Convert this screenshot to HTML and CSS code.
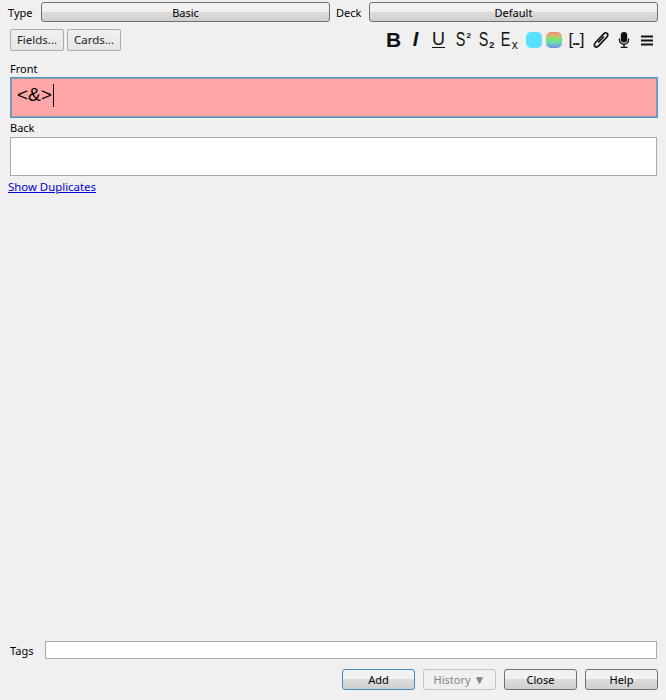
FILE: index.html
```html
<!DOCTYPE html>
<html lang="en">
<head>
<meta charset="utf-8">
<title>Add</title>
<link rel="stylesheet" href="styles.css">
</head>
<body>
<div class="app">
  <div class="chooser">
    <span class="chooser-label type-label">Type</span>
    <button class="combo">Basic</button>
    <span class="chooser-label deck-label">Deck</span>
    <button class="combo">Default</button>
  </div>
  <div class="toolbar">
    <button class="flat">Fields...</button>
    <button class="flat">Cards...</button>
    <div class="icons">
      <span class="ic ic-b">B</span>
      <span class="ic ic-i">I</span>
      <span class="ic ic-u">U</span>
      <span class="ic ic-s"><span class="narrow">S</span><sup>2</sup></span>
      <span class="ic ic-s"><span class="narrow">S</span><sub>2</sub></span>
      <span class="ic ic-e"><span class="narrow">E</span><sub>x</sub></span>
      <span class="swatch-cell"><span class="swatch swatch-blue"></span></span>
      <span class="swatch-cell"><span class="swatch swatch-rainbow"></span></span>
      <span class="ic ic-cloze">[<b class="dots">...</b>]</span>
      <span class="svg-cell"><svg width="18" height="18" viewBox="0 0 18 18" fill="none" stroke="#111" stroke-width="1.700" stroke-linecap="round"><path d="M11.500 3.200 3.500 11.500c-1.500 1.600-1.500 3.200-.5 4 1 .8 2.500.5 3.800-.8l7.700-8.200c1.500-1.700 1.600-3.300.6-4.200-1.100-.9-2.600-.7-3.600.9z"/><path d="M11.500 6 6.700 11"/></svg></span>
      <span class="svg-cell"><svg width="18" height="18" viewBox="0 0 18 18" fill="#111"><rect x="5.800" y="1" width="6.400" height="10.500" rx="3.200"/><path d="M3.800 7.500h1.300v1.300c0 2.100 1.700 3.800 3.900 3.800s3.900-1.700 3.900-3.800V7.500h1.300v1.400c0 2.600-1.900 4.600-4.500 4.900v1.900h2.800V17H5.700v-1.300h2.600v-1.900c-2.600-.3-4.500-2.300-4.500-4.900z"/></svg></span>
      <span class="svg-cell"><svg width="14" height="18" viewBox="0 0 14 18" fill="#111"><rect x="1" y="4.500" width="12" height="2"/><rect x="1" y="8.500" width="12" height="2"/><rect x="1" y="12.500" width="12" height="2"/></svg></span>
    </div>
  </div>
  <div class="field-label front-label">Front</div>
  <div class="field field-front"><span class="field-text">&lt;&amp;&gt;</span><span class="caret"></span></div>
  <div class="field-label back-label">Back</div>
  <div class="field field-back"></div>
  <a class="dupes" href="#">Show Duplicates</a>
  <div class="spacer"></div>
  <div class="tags">
    <span class="tags-label">Tags</span>
    <div class="tags-input"></div>
  </div>
  <div class="actions">
    <button class="btn btn-default">Add</button>
    <button class="btn btn-disabled">History <span class="arrow">▼</span></button>
    <button class="btn">Close</button>
    <button class="btn">Help</button>
  </div>
</div>
</body>
</html>
```

FILE: styles.css
```css
* { box-sizing: border-box; }
html, body { margin: 0; padding: 0; }
body {
  background: #f0f0f0;
  color: #000;
  font-family: "Noto Sans", "Open Sans", sans-serif;
  font-size: 11px;
  line-height: 14px;
}
.app {
  width: 666px;
  height: 700px;
  display: flex;
  flex-direction: column;
  overflow: hidden;
}
button { font: inherit; color: inherit; padding: 0; margin: 0; }

.chooser {
  display: flex;
  align-items: center;
  height: 20px;
  margin: 2px 8px 0 0;
}
.chooser-label { flex: none; padding-top: 2px; }
.type-label { width: 41px; padding-left: 8px; }
.deck-label { width: 39px; padding-left: 6px; }
.combo {
  flex: 1 1 0;
  height: 20px;
  border: 1px solid #707070;
  border-radius: 3px;
  background: linear-gradient(#f2f2f2 0 45%, #dddddd 50%, #cfcfcf 100%);
  padding-top: 1px;
}

.toolbar {
  display: flex;
  align-items: center;
  height: 23px;
  margin-top: 6px;
  padding: 0 8px 0 10px;
  gap: 3px;
}
.flat {
  width: 54px;
  height: 22px;
  border: 1px solid #acacac;
  border-radius: 2px;
  background: linear-gradient(#f0f0f0, #e5e5e5);
  font-size: 11.500px;
  color: #222;
}
.icons {
  margin-left: auto;
  display: flex;
  align-items: center;
  height: 23px;
  font-family: "Liberation Sans", sans-serif;
}
.ic {
  display: block;
  flex: none;
  width: 23px;
  text-align: center;
  color: #111;
  line-height: 23px;
  white-space: nowrap;
}
.ic-b { font-weight: 700; font-size: 21px; padding-left: 2px; }
.ic-i { font-weight: 700; font-style: italic; font-size: 20px; }
.ic-u { font-size: 18px; text-decoration: underline; text-underline-offset: 2px; text-decoration-thickness: 1px; }
.ic-s, .ic-e { font-size: 20px; padding-left: 4px; }
.narrow { display: inline-block; margin: 0 -2px; transform: scaleX(0.720); }
.ic-s sup, .ic-s sub, .ic-e sub { line-height: 0; position: static; }
.ic-s sup { font-size: 8px; font-weight: 700; vertical-align: 8px; margin-left: 1px; }
.ic-s sub { font-size: 9px; font-weight: 700; vertical-align: -2px; margin-left: 1px; }
.ic-e sub { font-size: 12px; vertical-align: -3px; margin-left: 1px; }
.swatch-cell {
  display: flex;
  justify-content: center;
  flex: none;
  width: 20px;
}
.ic-e { margin-right: 5px; }
.swatch {
  display: block;
  width: 16px;
  height: 16px;
  border-radius: 5px;
}
.swatch-blue { background: #5ae0ff; }
.swatch-rainbow {
  background: linear-gradient(#f08878 0%, #d8b870 22%, #70e878 48%, #70d8b0 68%, #7088f0 100%);
}
.ic-cloze { font-size: 17px; width: 25px; }
.dots { font-size: 13px; letter-spacing: -1.500px; margin: 0 1px 0 -1px; }
.svg-cell { display: flex; justify-content: center; flex: none; width: 23px; }

.field-label { padding-left: 10px; height: 14px; }
.front-label { margin-top: 11px; }
.back-label { margin-top: 3px; }
.field {
  flex: none;
  margin-left: 10px;
  background: #fff;
  border: 1px solid #a9a9a9;
}
.field-front {
  width: 648px;
  height: 41px;
  margin-top: 1px;
  background: #ffa6a6;
  border: 1px solid #4a98dc;
  box-shadow: inset 0 0 0 1px #999;
  display: flex;
  align-items: center;
  padding: 0 0 5px 6px;
}
.field-text { font-family: "Liberation Sans", sans-serif; font-size: 19px; line-height: 24px; }
.caret { display: block; width: 1px; height: 23px; background: #000; margin-left: 1px; }
.field-back { width: 647px; height: 39px; margin-top: 2px; }
.dupes {
  align-self: flex-start;
  margin: 4px 0 0 8px;
  color: #0000d8;
  font-size: 11.400px;
  text-decoration: underline;
}

.spacer { flex: 1; }
.tags { display: flex; align-items: center; height: 18px; padding-left: 10px; padding-right: 9px; }
.tags-label { width: 35px; flex: none; padding-top: 2px; }
.tags-input { flex: 1; height: 18px; background: #fff; border: 1px solid #ababab; }
.actions {
  display: flex;
  justify-content: flex-end;
  gap: 8px;
  margin-top: 10px;
  margin-bottom: 10px;
  padding-right: 8px;
}
.btn {
  width: 73px;
  height: 21px;
  border: 1px solid #707070;
  border-radius: 3px;
  background: linear-gradient(#f2f2f2 0 45%, #dddddd 50%, #cfcfcf 100%);
}
.btn-default { border-color: #3c8fc0; }
.btn-disabled { background: #f0f0f0; border-color: #c4c4c4; color: #838383; }
.arrow { font-size: 12px; }
```
